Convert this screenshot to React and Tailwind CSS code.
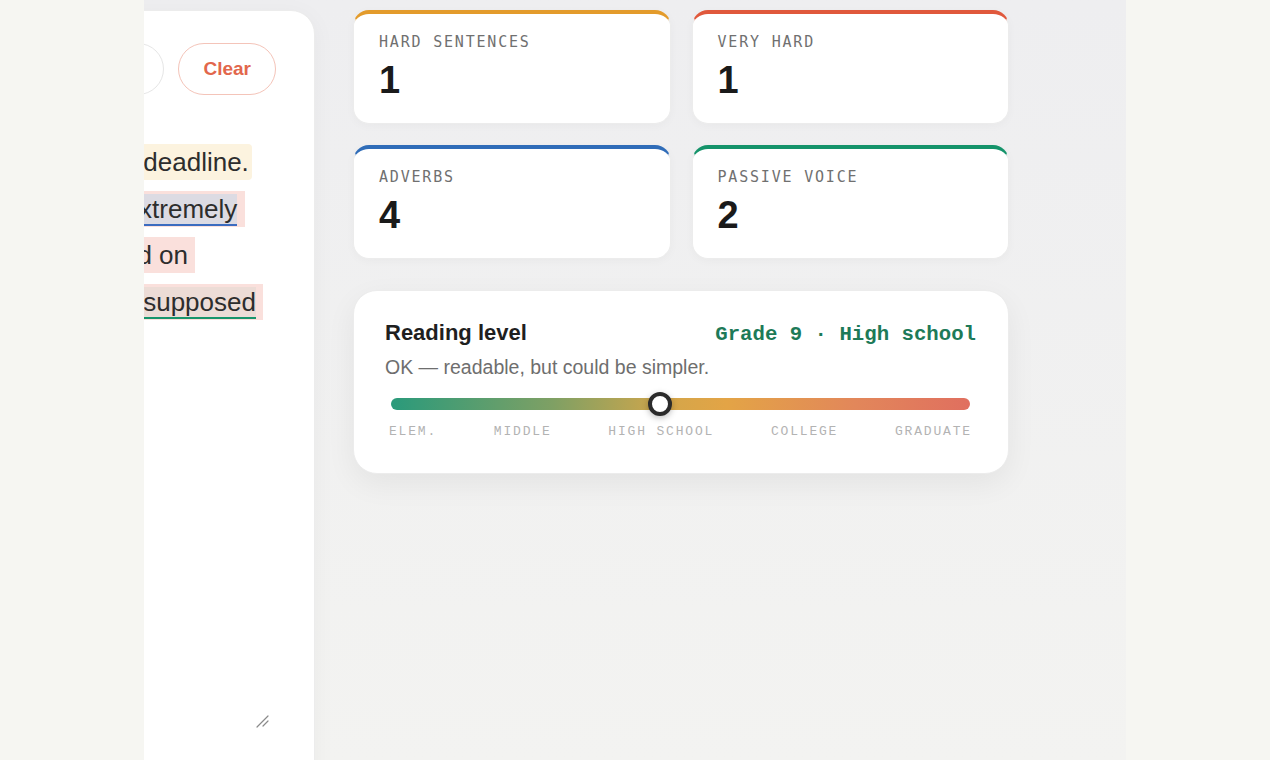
import React from "react";

const SANS = "font-['Liberation_Sans',Arial,sans-serif]";

const STATS = [
  { label: "HARD SENTENCES", value: 1, bar: "border-t-[#e39b2b]" },
  { label: "VERY HARD", value: 1, bar: "border-t-[#e0583c]" },
  { label: "ADVERBS", value: 4, bar: "border-t-[#2f6cb8]" },
  { label: "PASSIVE VOICE", value: 2, bar: "border-t-[#14936a]" },
];

const SCALE = ["ELEM.", "MIDDLE", "HIGH SCHOOL", "COLLEGE", "GRADUATE"];

const SAMPLE =
  "The report was done after the deadline.\n" +
  "Since the projects had been extremely \n" +
  "complicated and others worked on \n" +
  "their own chores, nobody was supposed \n" +
  "to review it.";

const grade = 9;
const gradePct = ((grade - 1) / 16) * 93;

function StatCard({ label, value, bar }) {
  return (
    <div
      className={`bg-white rounded-2xl border border-[#ececec] border-t-4 ${bar} px-[25px] pt-[18px] pb-[24px] shadow-[0_2px_10px_rgba(0,0,0,0.03)]`}
    >
      <div className="font-['DejaVu_Sans_Mono',monospace] text-[15px] leading-[20px] tracking-[0.12em] text-[#707070]">
        {label}
      </div>
      <div className={`${SANS} mt-[9px] text-[38px] leading-none font-bold text-[#1a1a1a]`}>
        {value}
      </div>
    </div>
  );
}

function ResizeGrip() {
  return (
    <svg
      className="absolute right-[2px] bottom-[2px] pointer-events-none"
      width="14"
      height="14"
      viewBox="0 0 14 14"
    >
      <path d="M1 13 L12 2 M7 12 L12 7" stroke="#8a8a8a" strokeWidth="1.2" strokeLinecap="round" />
    </svg>
  );
}

function Editor() {
  return (
    <div className="relative mt-[44px] mr-[4px] h-[591px]">
      {/* highlight layer under the textarea */}
      <div
        className={`${SANS} absolute inset-0 whitespace-break-spaces text-[26px] leading-[46.6px] text-[#2d2d2d] pointer-events-none`}
      >
        <span className="bg-[#fcf3df] rounded px-[3px] py-[3px]">
          The report was done after the deadline.
        </span>
        {"\n"}
        <span className="bg-[#fae0dc] rounded px-[3px] py-[3px]">
          Since the projects had been{" "}
          <span className="bg-[#dcdbe3] border-b-2 border-[#3b6cc0]">extremely</span>
          {" \ncomplicated and others worked on \ntheir own chores, nobody "}
          <span className="bg-[#ecdcd6] border-b-2 border-[#17956b]">was supposed</span>
          {" \nto review it."}
        </span>
      </div>
      <textarea
        defaultValue={SAMPLE}
        spellCheck={false}
        className={`${SANS} absolute inset-0 w-full h-full resize-none overflow-hidden bg-transparent text-transparent caret-[#2d2d2d] text-[26px] leading-[46.6px] outline-none whitespace-break-spaces`}
      />
      <ResizeGrip />
    </div>
  );
}

function InputPanel() {
  return (
    <div className="w-[562px] h-[800px] shrink-0 bg-white rounded-[24px] border border-[#ececec] shadow-[0_4px_24px_rgba(0,0,0,0.04)] pt-8 px-[38px]">
      <div className="flex items-center justify-between">
        <h2 className={`${SANS} text-[22px] font-bold text-[#1f1f1f]`}>Your writing</h2>
        <div className="flex items-center gap-[14px]">
          <button
            className={`${SANS} h-[52px] px-6 rounded-full border-[1.5px] border-[#e6e6e6] text-[19px] font-bold text-[#555]`}
          >
            Load sample
          </button>
          <button
            className={`${SANS} h-[52px] px-6 rounded-full border-[1.5px] border-[#f4c4b9] text-[19px] font-bold text-[#e2674c]`}
          >
            Clear
          </button>
        </div>
      </div>
      <Editor />
    </div>
  );
}

function ReadingLevel() {
  return (
    <div className="mt-[31px] bg-white rounded-[24px] border border-[#ececec] pl-[31px] pr-8 pt-7 pb-[32px] shadow-[0_10px_30px_rgba(0,0,0,0.06)]">
      <div className="flex items-baseline justify-between">
        <h3 className={`${SANS} text-[22px] leading-[1.3] font-bold text-[#1f1f1f]`}>
          Reading level
        </h3>
        <span className="font-['Liberation_Mono',monospace] text-[20.7px] font-bold text-[#1d7a58]">
          Grade {grade} · High school
        </span>
      </div>
      <p className={`${SANS} mt-[4px] text-[19.5px] leading-[1.4] text-[#6e6e6e]`}>
        OK — readable, but could be simpler.
      </p>

      <div className="relative mt-[11px] h-6 mx-[6px]">
        <div className="absolute inset-x-0 top-1/2 -translate-y-1/2 h-3 rounded-full bg-[linear-gradient(90deg,#2a9a7b_0%,#7fa064_28%,#d4a64a_48%,#e3a446_58%,#e2875a_80%,#e06f5f_100%)]" />
        <div
          className="absolute top-0 -translate-x-1/2 w-6 h-6 rounded-full bg-white border-4 border-[#2b2b2b] shadow-[0_2px_6px_rgba(0,0,0,0.25)]"
          style={{ left: `${gradePct}%` }}
        />
      </div>

      <div className="mt-[7px] px-1 flex justify-between font-['Liberation_Mono',monospace] text-[13px] leading-[18px] tracking-[0.14em] text-[#b3b3b3]">
        {SCALE.map((s) => (
          <span key={s}>{s}</span>
        ))}
      </div>
    </div>
  );
}

export default function App() {
  return (
    <div className="h-[760px] bg-[#f6f6f2] flex justify-center">
      <div className="w-[982px] h-full overflow-hidden flex justify-end items-start gap-[38px] pt-[10px] pr-[117px] bg-gradient-to-b from-[#eeeef0] to-[#f3f3f1]">
        <InputPanel />

        <div className="w-[656px] shrink-0">
          <div className="grid grid-cols-2 gap-[21px]">
            {STATS.map((s) => (
              <StatCard key={s.label} {...s} />
            ))}
          </div>
          <ReadingLevel />
        </div>
      </div>
    </div>
  );
}
